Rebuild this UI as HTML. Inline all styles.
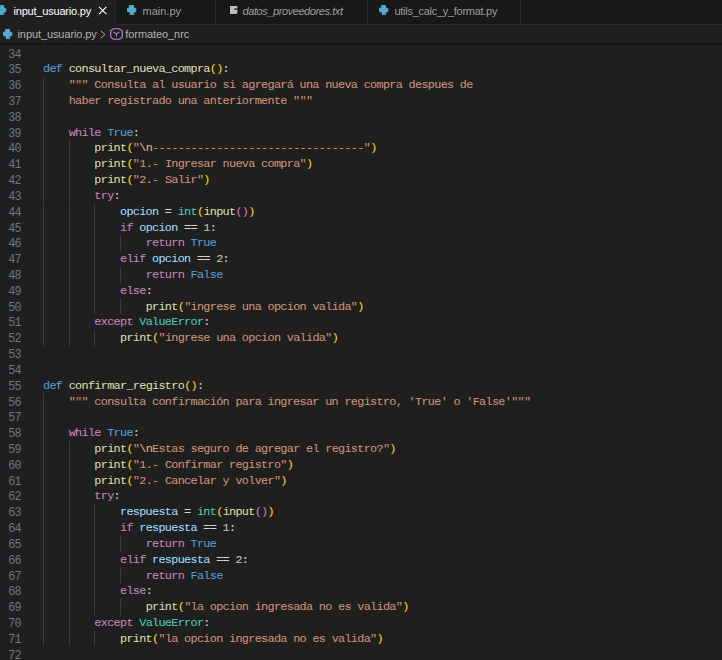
<!DOCTYPE html>
<html><head><meta charset="utf-8">
<style>
html,body{margin:0;padding:0;width:722px;height:660px;overflow:hidden;background:#1f1f1f;}
body{position:relative;font-family:"Liberation Sans",sans-serif;}
#tabs{position:absolute;left:0;top:0;width:722px;height:25px;background:#181818;border-bottom:1px solid #2b2b2b;box-sizing:border-box;}
.tab{position:absolute;top:0;height:25px;box-sizing:border-box;border-right:1px solid #2b2b2b;border-bottom:1px solid #2b2b2b;background:#181818;}
.tab.active{background:#1f1f1f;border-bottom:none;}
.tl{position:absolute;top:-1px;font-size:11px;line-height:24px;height:24px;color:#9d9d9d;white-space:nowrap;}
.active .tl{color:#ffffff;}
.ic{position:absolute;}
#bc{position:absolute;left:0;top:25px;width:722px;height:18px;background:#1f1f1f;}
.bct{position:absolute;top:25px;font-size:11px;line-height:19px;color:#b0b0b0;white-space:nowrap;}
#ed{position:absolute;left:0;top:43px;width:722px;height:617px;overflow:hidden;}
.ln,.cl,.ig{position:absolute;}
.ln{left:0;width:21px;transform:scaleY(1.03);text-align:right;font-family:"Liberation Mono",monospace;font-size:11.7px;line-height:15.82px;height:15.82px;color:#6e7681;letter-spacing:-0.6px;}
.cl{left:43px;font-family:"Liberation Mono",monospace;font-size:11.8px;line-height:15.82px;height:15.82px;white-space:pre;letter-spacing:-0.666px;-webkit-text-stroke:0.08px currentColor;}
.ig{width:1px;height:15.82px;background:#3c3c3c;}
#shadow{position:absolute;left:0;top:43px;width:722px;height:3px;background:linear-gradient(#00000088,#00000000);}
</style></head><body>
<div id="tabs">
  <div class="tab active" style="left:-20px;width:136px;">
    <svg class="ic" style="left:17px;top:5px" width="10" height="10" viewBox="0 0 10 10"><path fill="#58b2d8" stroke="#58b2d8" stroke-width="0.8" stroke-linejoin="round" d="M2.3 0.5H6.6V3.3H8.8V6.8H6.8V9.5H3.2V6.8H0.4V3.2H2.3Z"/><circle cx="3.3" cy="1.7" r="0.55" fill="#2d5a72"/><circle cx="6" cy="8.4" r="0.55" fill="#2d5a72"/><path d="M3.2 5.3L6.6 4.6" stroke="#3d88b0" stroke-width="0.7"/></svg>
    <div class="tl" style="left:33.5px;letter-spacing:-0.2px;">input_usuario.py</div>
    <svg class="ic" style="left:118px;top:6px" width="10" height="9" viewBox="0 0 10 9"><path d="M1 0.9L8.4 8.1M8.4 0.9L1 8.1" stroke="#ffffff" stroke-width="1.1" fill="none"/></svg>
  </div>
  <div class="tab" style="left:116px;width:100px;">
    <svg class="ic" style="left:11px;top:5px" width="10" height="10" viewBox="0 0 10 10"><path fill="#58b2d8" stroke="#58b2d8" stroke-width="0.8" stroke-linejoin="round" d="M2.3 0.5H6.6V3.3H8.8V6.8H6.8V9.5H3.2V6.8H0.4V3.2H2.3Z"/><circle cx="3.3" cy="1.7" r="0.55" fill="#2d5a72"/><circle cx="6" cy="8.4" r="0.55" fill="#2d5a72"/><path d="M3.2 5.3L6.6 4.6" stroke="#3d88b0" stroke-width="0.7"/></svg>
    <div class="tl" style="left:26.5px;">main.py</div>
  </div>
  <div class="tab" style="left:216px;width:152px;">
    <svg class="ic" style="left:13.8px;top:5.8px" width="8" height="8.2" viewBox="0 0 8 8.2"><path fill="#bcbcbc" d="M0 0h7.4v2.4h-3.2v1.4h3.2v3.8h-1.2v0.6h-6.2z"/></svg>
    <div class="tl" style="left:26.5px;font-style:italic;letter-spacing:-0.42px;">datos_proveedores.txt</div>
  </div>
  <div class="tab" style="left:368px;width:153px;">
    <svg class="ic" style="left:11px;top:5px" width="10" height="10" viewBox="0 0 10 10"><path fill="#58b2d8" stroke="#58b2d8" stroke-width="0.8" stroke-linejoin="round" d="M2.3 0.5H6.6V3.3H8.8V6.8H6.8V9.5H3.2V6.8H0.4V3.2H2.3Z"/><circle cx="3.3" cy="1.7" r="0.55" fill="#2d5a72"/><circle cx="6" cy="8.4" r="0.55" fill="#2d5a72"/><path d="M3.2 5.3L6.6 4.6" stroke="#3d88b0" stroke-width="0.7"/></svg>
    <div class="tl" style="left:26.5px;letter-spacing:-0.28px;">utils_calc_y_format.py</div>
  </div>
</div>
<div id="bc"></div>
<svg class="ic" style="left:2.5px;top:28.5px" width="10" height="10" viewBox="0 0 10 10"><path fill="#58b2d8" stroke="#58b2d8" stroke-width="0.8" stroke-linejoin="round" d="M2.3 0.5H6.6V3.3H8.8V6.8H6.8V9.5H3.2V6.8H0.4V3.2H2.3Z"/><circle cx="3.3" cy="1.7" r="0.55" fill="#2d5a72"/><circle cx="6" cy="8.4" r="0.55" fill="#2d5a72"/><path d="M3.2 5.3L6.6 4.6" stroke="#3d88b0" stroke-width="0.7"/></svg>
<div class="bct" style="left:17.5px;letter-spacing:-0.09px;">input_usuario.py</div>
<svg class="ic" style="left:100px;top:30px" width="6" height="9" viewBox="0 0 6 9"><path d="M0.8 0.8L5 4.5L0.8 8.2" stroke="#b0b0b0" stroke-width="1" fill="none"/></svg>
<svg class="ic" style="left:110px;top:27.6px" width="13" height="12" viewBox="0 0 13 12"><path d="M3.6 0.7H9.4L12.3 2.9V9.1L9.4 11.2H3.6L0.7 9.1V2.9Z" stroke="#b685d8" stroke-width="1.15" fill="none" stroke-linejoin="round"/><path d="M3.3 3.9L6.5 5.9L9.7 3.9M6.5 5.9V8.8" stroke="#b685d8" stroke-width="1.1" fill="none"/></svg>
<div class="bct" style="left:125.3px;letter-spacing:-0.08px;">formateo_nrc</div>
<div id="ed">
<div style="position:absolute;left:0;top:-43px;">
<div class="ig" style="top:29.48px;left:43.00px"></div>
<div class="ig" style="top:29.48px;left:68.66px"></div>
<div class="ig" style="top:29.48px;left:94.31px"></div>
<div class="ln" style="top:47.50px">34</div>
<div class="ln" style="top:63.32px">35</div>
<div class="cl" style="top:62.32px"><span style="color:#569cd6">def</span><span style="color:#d4d4d4"> </span><span style="color:#dcdcaa">consultar_nueva_compra</span><span style="color:#ffd700">(</span><span style="color:#ffd700">)</span><span style="color:#d4d4d4">:</span></div>
<div class="ln" style="top:79.14px">36</div>
<div class="ig" style="top:76.94px;left:43.00px"></div>
<div class="cl" style="top:78.14px"><span style="color:#d4d4d4">    </span><span style="color:#ce9178">&quot;&quot;&quot; Consulta al usuario si agregará una nueva compra despues de</span></div>
<div class="ln" style="top:94.96px">37</div>
<div class="ig" style="top:92.76px;left:43.00px"></div>
<div class="cl" style="top:93.96px"><span style="color:#d4d4d4">    </span><span style="color:#ce9178">haber registrado una anteriormente &quot;&quot;&quot;</span></div>
<div class="ln" style="top:110.78px">38</div>
<div class="ig" style="top:108.58px;left:43.00px"></div>
<div class="ln" style="top:126.60px">39</div>
<div class="ig" style="top:124.40px;left:43.00px"></div>
<div class="cl" style="top:125.60px"><span style="color:#d4d4d4">    </span><span style="color:#c586c0">while</span><span style="color:#d4d4d4"> </span><span style="color:#569cd6">True</span><span style="color:#d4d4d4">:</span></div>
<div class="ln" style="top:142.42px">40</div>
<div class="ig" style="top:140.22px;left:43.00px"></div>
<div class="ig" style="top:140.22px;left:68.66px"></div>
<div class="cl" style="top:141.42px"><span style="color:#d4d4d4">        </span><span style="color:#dcdcaa">print</span><span style="color:#ffd700">(</span><span style="color:#ce9178">&quot;</span><span style="color:#d7ba7d">\n</span><span style="color:#ce9178">---------------------------------&quot;</span><span style="color:#ffd700">)</span></div>
<div class="ln" style="top:158.24px">41</div>
<div class="ig" style="top:156.04px;left:43.00px"></div>
<div class="ig" style="top:156.04px;left:68.66px"></div>
<div class="cl" style="top:157.24px"><span style="color:#d4d4d4">        </span><span style="color:#dcdcaa">print</span><span style="color:#ffd700">(</span><span style="color:#ce9178">&quot;1.- Ingresar nueva compra&quot;</span><span style="color:#ffd700">)</span></div>
<div class="ln" style="top:174.06px">42</div>
<div class="ig" style="top:171.86px;left:43.00px"></div>
<div class="ig" style="top:171.86px;left:68.66px"></div>
<div class="cl" style="top:173.06px"><span style="color:#d4d4d4">        </span><span style="color:#dcdcaa">print</span><span style="color:#ffd700">(</span><span style="color:#ce9178">&quot;2.- Salir&quot;</span><span style="color:#ffd700">)</span></div>
<div class="ln" style="top:189.88px">43</div>
<div class="ig" style="top:187.68px;left:43.00px"></div>
<div class="ig" style="top:187.68px;left:68.66px"></div>
<div class="cl" style="top:188.88px"><span style="color:#d4d4d4">        </span><span style="color:#c586c0">try</span><span style="color:#d4d4d4">:</span></div>
<div class="ln" style="top:205.70px">44</div>
<div class="ig" style="top:203.50px;left:43.00px"></div>
<div class="ig" style="top:203.50px;left:68.66px"></div>
<div class="ig" style="top:203.50px;left:94.31px"></div>
<div class="cl" style="top:204.70px"><span style="color:#d4d4d4">            </span><span style="color:#9cdcfe">opcion</span><span style="color:#d4d4d4"> = </span><span style="color:#4ec9b0">int</span><span style="color:#ffd700">(</span><span style="color:#dcdcaa">input</span><span style="color:#da70d6">()</span><span style="color:#ffd700">)</span></div>
<div class="ln" style="top:221.52px">45</div>
<div class="ig" style="top:219.32px;left:43.00px"></div>
<div class="ig" style="top:219.32px;left:68.66px"></div>
<div class="ig" style="top:219.32px;left:94.31px"></div>
<div class="cl" style="top:220.52px"><span style="color:#d4d4d4">            </span><span style="color:#c586c0">if</span><span style="color:#d4d4d4"> </span><span style="color:#9cdcfe">opcion</span><span style="color:#d4d4d4"> == </span><span style="color:#b5cea8">1</span><span style="color:#d4d4d4">:</span></div>
<div class="ln" style="top:237.34px">46</div>
<div class="ig" style="top:235.14px;left:43.00px"></div>
<div class="ig" style="top:235.14px;left:68.66px"></div>
<div class="ig" style="top:235.14px;left:94.31px"></div>
<div class="ig" style="top:235.14px;left:119.97px"></div>
<div class="cl" style="top:236.34px"><span style="color:#d4d4d4">                </span><span style="color:#c586c0">return</span><span style="color:#d4d4d4"> </span><span style="color:#569cd6">True</span></div>
<div class="ln" style="top:253.16px">47</div>
<div class="ig" style="top:250.96px;left:43.00px"></div>
<div class="ig" style="top:250.96px;left:68.66px"></div>
<div class="ig" style="top:250.96px;left:94.31px"></div>
<div class="cl" style="top:252.16px"><span style="color:#d4d4d4">            </span><span style="color:#c586c0">elif</span><span style="color:#d4d4d4"> </span><span style="color:#9cdcfe">opcion</span><span style="color:#d4d4d4"> == </span><span style="color:#b5cea8">2</span><span style="color:#d4d4d4">:</span></div>
<div class="ln" style="top:268.98px">48</div>
<div class="ig" style="top:266.78px;left:43.00px"></div>
<div class="ig" style="top:266.78px;left:68.66px"></div>
<div class="ig" style="top:266.78px;left:94.31px"></div>
<div class="ig" style="top:266.78px;left:119.97px"></div>
<div class="cl" style="top:267.98px"><span style="color:#d4d4d4">                </span><span style="color:#c586c0">return</span><span style="color:#d4d4d4"> </span><span style="color:#569cd6">False</span></div>
<div class="ln" style="top:284.80px">49</div>
<div class="ig" style="top:282.60px;left:43.00px"></div>
<div class="ig" style="top:282.60px;left:68.66px"></div>
<div class="ig" style="top:282.60px;left:94.31px"></div>
<div class="cl" style="top:283.80px"><span style="color:#d4d4d4">            </span><span style="color:#c586c0">else</span><span style="color:#d4d4d4">:</span></div>
<div class="ln" style="top:300.62px">50</div>
<div class="ig" style="top:298.42px;left:43.00px"></div>
<div class="ig" style="top:298.42px;left:68.66px"></div>
<div class="ig" style="top:298.42px;left:94.31px"></div>
<div class="ig" style="top:298.42px;left:119.97px"></div>
<div class="cl" style="top:299.62px"><span style="color:#d4d4d4">                </span><span style="color:#dcdcaa">print</span><span style="color:#ffd700">(</span><span style="color:#ce9178">&quot;ingrese una opcion valida&quot;</span><span style="color:#ffd700">)</span></div>
<div class="ln" style="top:316.44px">51</div>
<div class="ig" style="top:314.24px;left:43.00px"></div>
<div class="ig" style="top:314.24px;left:68.66px"></div>
<div class="cl" style="top:315.44px"><span style="color:#d4d4d4">        </span><span style="color:#c586c0">except</span><span style="color:#d4d4d4"> </span><span style="color:#4ec9b0">ValueError</span><span style="color:#d4d4d4">:</span></div>
<div class="ln" style="top:332.26px">52</div>
<div class="ig" style="top:330.06px;left:43.00px"></div>
<div class="ig" style="top:330.06px;left:68.66px"></div>
<div class="ig" style="top:330.06px;left:94.31px"></div>
<div class="cl" style="top:331.26px"><span style="color:#d4d4d4">            </span><span style="color:#dcdcaa">print</span><span style="color:#ffd700">(</span><span style="color:#ce9178">&quot;ingrese una opcion valida&quot;</span><span style="color:#ffd700">)</span></div>
<div class="ln" style="top:348.08px">53</div>
<div class="ln" style="top:363.90px">54</div>
<div class="ln" style="top:379.72px">55</div>
<div class="cl" style="top:378.72px"><span style="color:#569cd6">def</span><span style="color:#d4d4d4"> </span><span style="color:#dcdcaa">confirmar_registro</span><span style="color:#ffd700">(</span><span style="color:#ffd700">)</span><span style="color:#d4d4d4">:</span></div>
<div class="ln" style="top:395.54px">56</div>
<div class="ig" style="top:393.34px;left:43.00px"></div>
<div class="cl" style="top:394.54px"><span style="color:#d4d4d4">    </span><span style="color:#ce9178">&quot;&quot;&quot; consulta confirmación para ingresar un registro, &#x27;True&#x27; o &#x27;False&#x27;&quot;&quot;&quot;</span></div>
<div class="ln" style="top:411.36px">57</div>
<div class="ig" style="top:409.16px;left:43.00px"></div>
<div class="ln" style="top:427.18px">58</div>
<div class="ig" style="top:424.98px;left:43.00px"></div>
<div class="cl" style="top:426.18px"><span style="color:#d4d4d4">    </span><span style="color:#c586c0">while</span><span style="color:#d4d4d4"> </span><span style="color:#569cd6">True</span><span style="color:#d4d4d4">:</span></div>
<div class="ln" style="top:443.00px">59</div>
<div class="ig" style="top:440.80px;left:43.00px"></div>
<div class="ig" style="top:440.80px;left:68.66px"></div>
<div class="cl" style="top:442.00px"><span style="color:#d4d4d4">        </span><span style="color:#dcdcaa">print</span><span style="color:#ffd700">(</span><span style="color:#ce9178">&quot;</span><span style="color:#d7ba7d">\n</span><span style="color:#ce9178">Estas seguro de agregar el registro?&quot;</span><span style="color:#ffd700">)</span></div>
<div class="ln" style="top:458.82px">60</div>
<div class="ig" style="top:456.62px;left:43.00px"></div>
<div class="ig" style="top:456.62px;left:68.66px"></div>
<div class="cl" style="top:457.82px"><span style="color:#d4d4d4">        </span><span style="color:#dcdcaa">print</span><span style="color:#ffd700">(</span><span style="color:#ce9178">&quot;1.- Confirmar registro&quot;</span><span style="color:#ffd700">)</span></div>
<div class="ln" style="top:474.64px">61</div>
<div class="ig" style="top:472.44px;left:43.00px"></div>
<div class="ig" style="top:472.44px;left:68.66px"></div>
<div class="cl" style="top:473.64px"><span style="color:#d4d4d4">        </span><span style="color:#dcdcaa">print</span><span style="color:#ffd700">(</span><span style="color:#ce9178">&quot;2.- Cancelar y volver&quot;</span><span style="color:#ffd700">)</span></div>
<div class="ln" style="top:490.46px">62</div>
<div class="ig" style="top:488.26px;left:43.00px"></div>
<div class="ig" style="top:488.26px;left:68.66px"></div>
<div class="cl" style="top:489.46px"><span style="color:#d4d4d4">        </span><span style="color:#c586c0">try</span><span style="color:#d4d4d4">:</span></div>
<div class="ln" style="top:506.28px">63</div>
<div class="ig" style="top:504.08px;left:43.00px"></div>
<div class="ig" style="top:504.08px;left:68.66px"></div>
<div class="ig" style="top:504.08px;left:94.31px"></div>
<div class="cl" style="top:505.28px"><span style="color:#d4d4d4">            </span><span style="color:#9cdcfe">respuesta</span><span style="color:#d4d4d4"> = </span><span style="color:#4ec9b0">int</span><span style="color:#ffd700">(</span><span style="color:#dcdcaa">input</span><span style="color:#da70d6">()</span><span style="color:#ffd700">)</span></div>
<div class="ln" style="top:522.10px">64</div>
<div class="ig" style="top:519.90px;left:43.00px"></div>
<div class="ig" style="top:519.90px;left:68.66px"></div>
<div class="ig" style="top:519.90px;left:94.31px"></div>
<div class="cl" style="top:521.10px"><span style="color:#d4d4d4">            </span><span style="color:#c586c0">if</span><span style="color:#d4d4d4"> </span><span style="color:#9cdcfe">respuesta</span><span style="color:#d4d4d4"> == </span><span style="color:#b5cea8">1</span><span style="color:#d4d4d4">:</span></div>
<div class="ln" style="top:537.92px">65</div>
<div class="ig" style="top:535.72px;left:43.00px"></div>
<div class="ig" style="top:535.72px;left:68.66px"></div>
<div class="ig" style="top:535.72px;left:94.31px"></div>
<div class="ig" style="top:535.72px;left:119.97px"></div>
<div class="cl" style="top:536.92px"><span style="color:#d4d4d4">                </span><span style="color:#c586c0">return</span><span style="color:#d4d4d4"> </span><span style="color:#569cd6">True</span></div>
<div class="ln" style="top:553.74px">66</div>
<div class="ig" style="top:551.54px;left:43.00px"></div>
<div class="ig" style="top:551.54px;left:68.66px"></div>
<div class="ig" style="top:551.54px;left:94.31px"></div>
<div class="cl" style="top:552.74px"><span style="color:#d4d4d4">            </span><span style="color:#c586c0">elif</span><span style="color:#d4d4d4"> </span><span style="color:#9cdcfe">respuesta</span><span style="color:#d4d4d4"> == </span><span style="color:#b5cea8">2</span><span style="color:#d4d4d4">:</span></div>
<div class="ln" style="top:569.56px">67</div>
<div class="ig" style="top:567.36px;left:43.00px"></div>
<div class="ig" style="top:567.36px;left:68.66px"></div>
<div class="ig" style="top:567.36px;left:94.31px"></div>
<div class="ig" style="top:567.36px;left:119.97px"></div>
<div class="cl" style="top:568.56px"><span style="color:#d4d4d4">                </span><span style="color:#c586c0">return</span><span style="color:#d4d4d4"> </span><span style="color:#569cd6">False</span></div>
<div class="ln" style="top:585.38px">68</div>
<div class="ig" style="top:583.18px;left:43.00px"></div>
<div class="ig" style="top:583.18px;left:68.66px"></div>
<div class="ig" style="top:583.18px;left:94.31px"></div>
<div class="cl" style="top:584.38px"><span style="color:#d4d4d4">            </span><span style="color:#c586c0">else</span><span style="color:#d4d4d4">:</span></div>
<div class="ln" style="top:601.20px">69</div>
<div class="ig" style="top:599.00px;left:43.00px"></div>
<div class="ig" style="top:599.00px;left:68.66px"></div>
<div class="ig" style="top:599.00px;left:94.31px"></div>
<div class="ig" style="top:599.00px;left:119.97px"></div>
<div class="cl" style="top:600.20px"><span style="color:#d4d4d4">                </span><span style="color:#dcdcaa">print</span><span style="color:#ffd700">(</span><span style="color:#ce9178">&quot;la opcion ingresada no es valida&quot;</span><span style="color:#ffd700">)</span></div>
<div class="ln" style="top:617.02px">70</div>
<div class="ig" style="top:614.82px;left:43.00px"></div>
<div class="ig" style="top:614.82px;left:68.66px"></div>
<div class="cl" style="top:616.02px"><span style="color:#d4d4d4">        </span><span style="color:#c586c0">except</span><span style="color:#d4d4d4"> </span><span style="color:#4ec9b0">ValueError</span><span style="color:#d4d4d4">:</span></div>
<div class="ln" style="top:632.84px">71</div>
<div class="ig" style="top:630.64px;left:43.00px"></div>
<div class="ig" style="top:630.64px;left:68.66px"></div>
<div class="ig" style="top:630.64px;left:94.31px"></div>
<div class="cl" style="top:631.84px"><span style="color:#d4d4d4">            </span><span style="color:#dcdcaa">print</span><span style="color:#ffd700">(</span><span style="color:#ce9178">&quot;la opcion ingresada no es valida&quot;</span><span style="color:#ffd700">)</span></div>
<div class="ln" style="top:648.66px">72</div>
</div>
</div>
<div id="shadow"></div>
</body></html>
